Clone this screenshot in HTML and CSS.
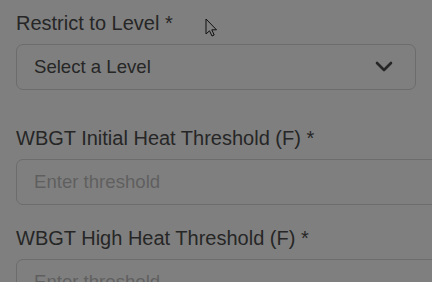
FILE: index.html
```html
<!DOCTYPE html>
<html>
<head>
<meta charset="utf-8">
<link rel="stylesheet" href="styles.css">
</head>
<body>
<form class="form">
  <div class="field field-select">
    <label class="label">Restrict to Level *</label>
    <div class="select">
      <span class="select-text">Select a Level</span>
      <svg class="chevron" width="18" height="12" viewBox="0 0 18 12"><polyline points="2,2 9,9 16,2" fill="none" stroke="#262626" stroke-width="2.6" stroke-linecap="round" stroke-linejoin="round"/></svg>
    </div>
  </div>
  <div class="field">
    <label class="label">WBGT Initial Heat Threshold (F) *</label>
    <div class="input"><span class="placeholder">Enter threshold</span></div>
  </div>
  <div class="field">
    <label class="label">WBGT High Heat Threshold (F) *</label>
    <div class="input"><span class="placeholder">Enter threshold</span></div>
  </div>
</form>
<svg class="cursor" width="14" height="20" viewBox="0 0 14 20"><path d="M1,1 L1,16 L4.5,12.8 L7,18 L9.2,17 L6.8,11.8 L11.5,11.8 Z" fill="#808080" stroke="#111" stroke-width="1" stroke-linejoin="round"/></svg>
</body>
</html>
```
FILE: styles.css
```css
html, body {
  margin: 0;
  padding: 0;
  background: #7f7f7f;
  overflow: hidden;
  width: 432px;
  height: 282px;
}
body {
  font-family: "Liberation Sans", Arial, sans-serif;
  position: relative;
}
.form {
  display: flex;
  flex-direction: column;
  padding: 11px 0 0 16px;
  width: 520px;
}
.field {
  display: flex;
  flex-direction: column;
  gap: 9px;
  margin-bottom: 21px;
}
.field-select {
  margin-bottom: 36px;
  width: 400px;
}
.label {
  font-size: 20px;
  line-height: 24px;
  color: #262626;
}
.select, .input {
  box-sizing: border-box;
  height: 46px;
  border: 1px solid #6c6c6c;
  border-radius: 7px;
  display: flex;
  align-items: center;
  padding: 0 0 0 17px;
}
.select {
  justify-content: space-between;
  padding-right: 22px;
}
.select-text {
  font-size: 18.6px;
  color: #262626;
}
.placeholder {
  font-size: 18.6px;
  color: #5f5f5f;
}
.chevron {
  display: block;
}
.cursor {
  position: absolute;
  left: 205px;
  top: 18px;
}
```
